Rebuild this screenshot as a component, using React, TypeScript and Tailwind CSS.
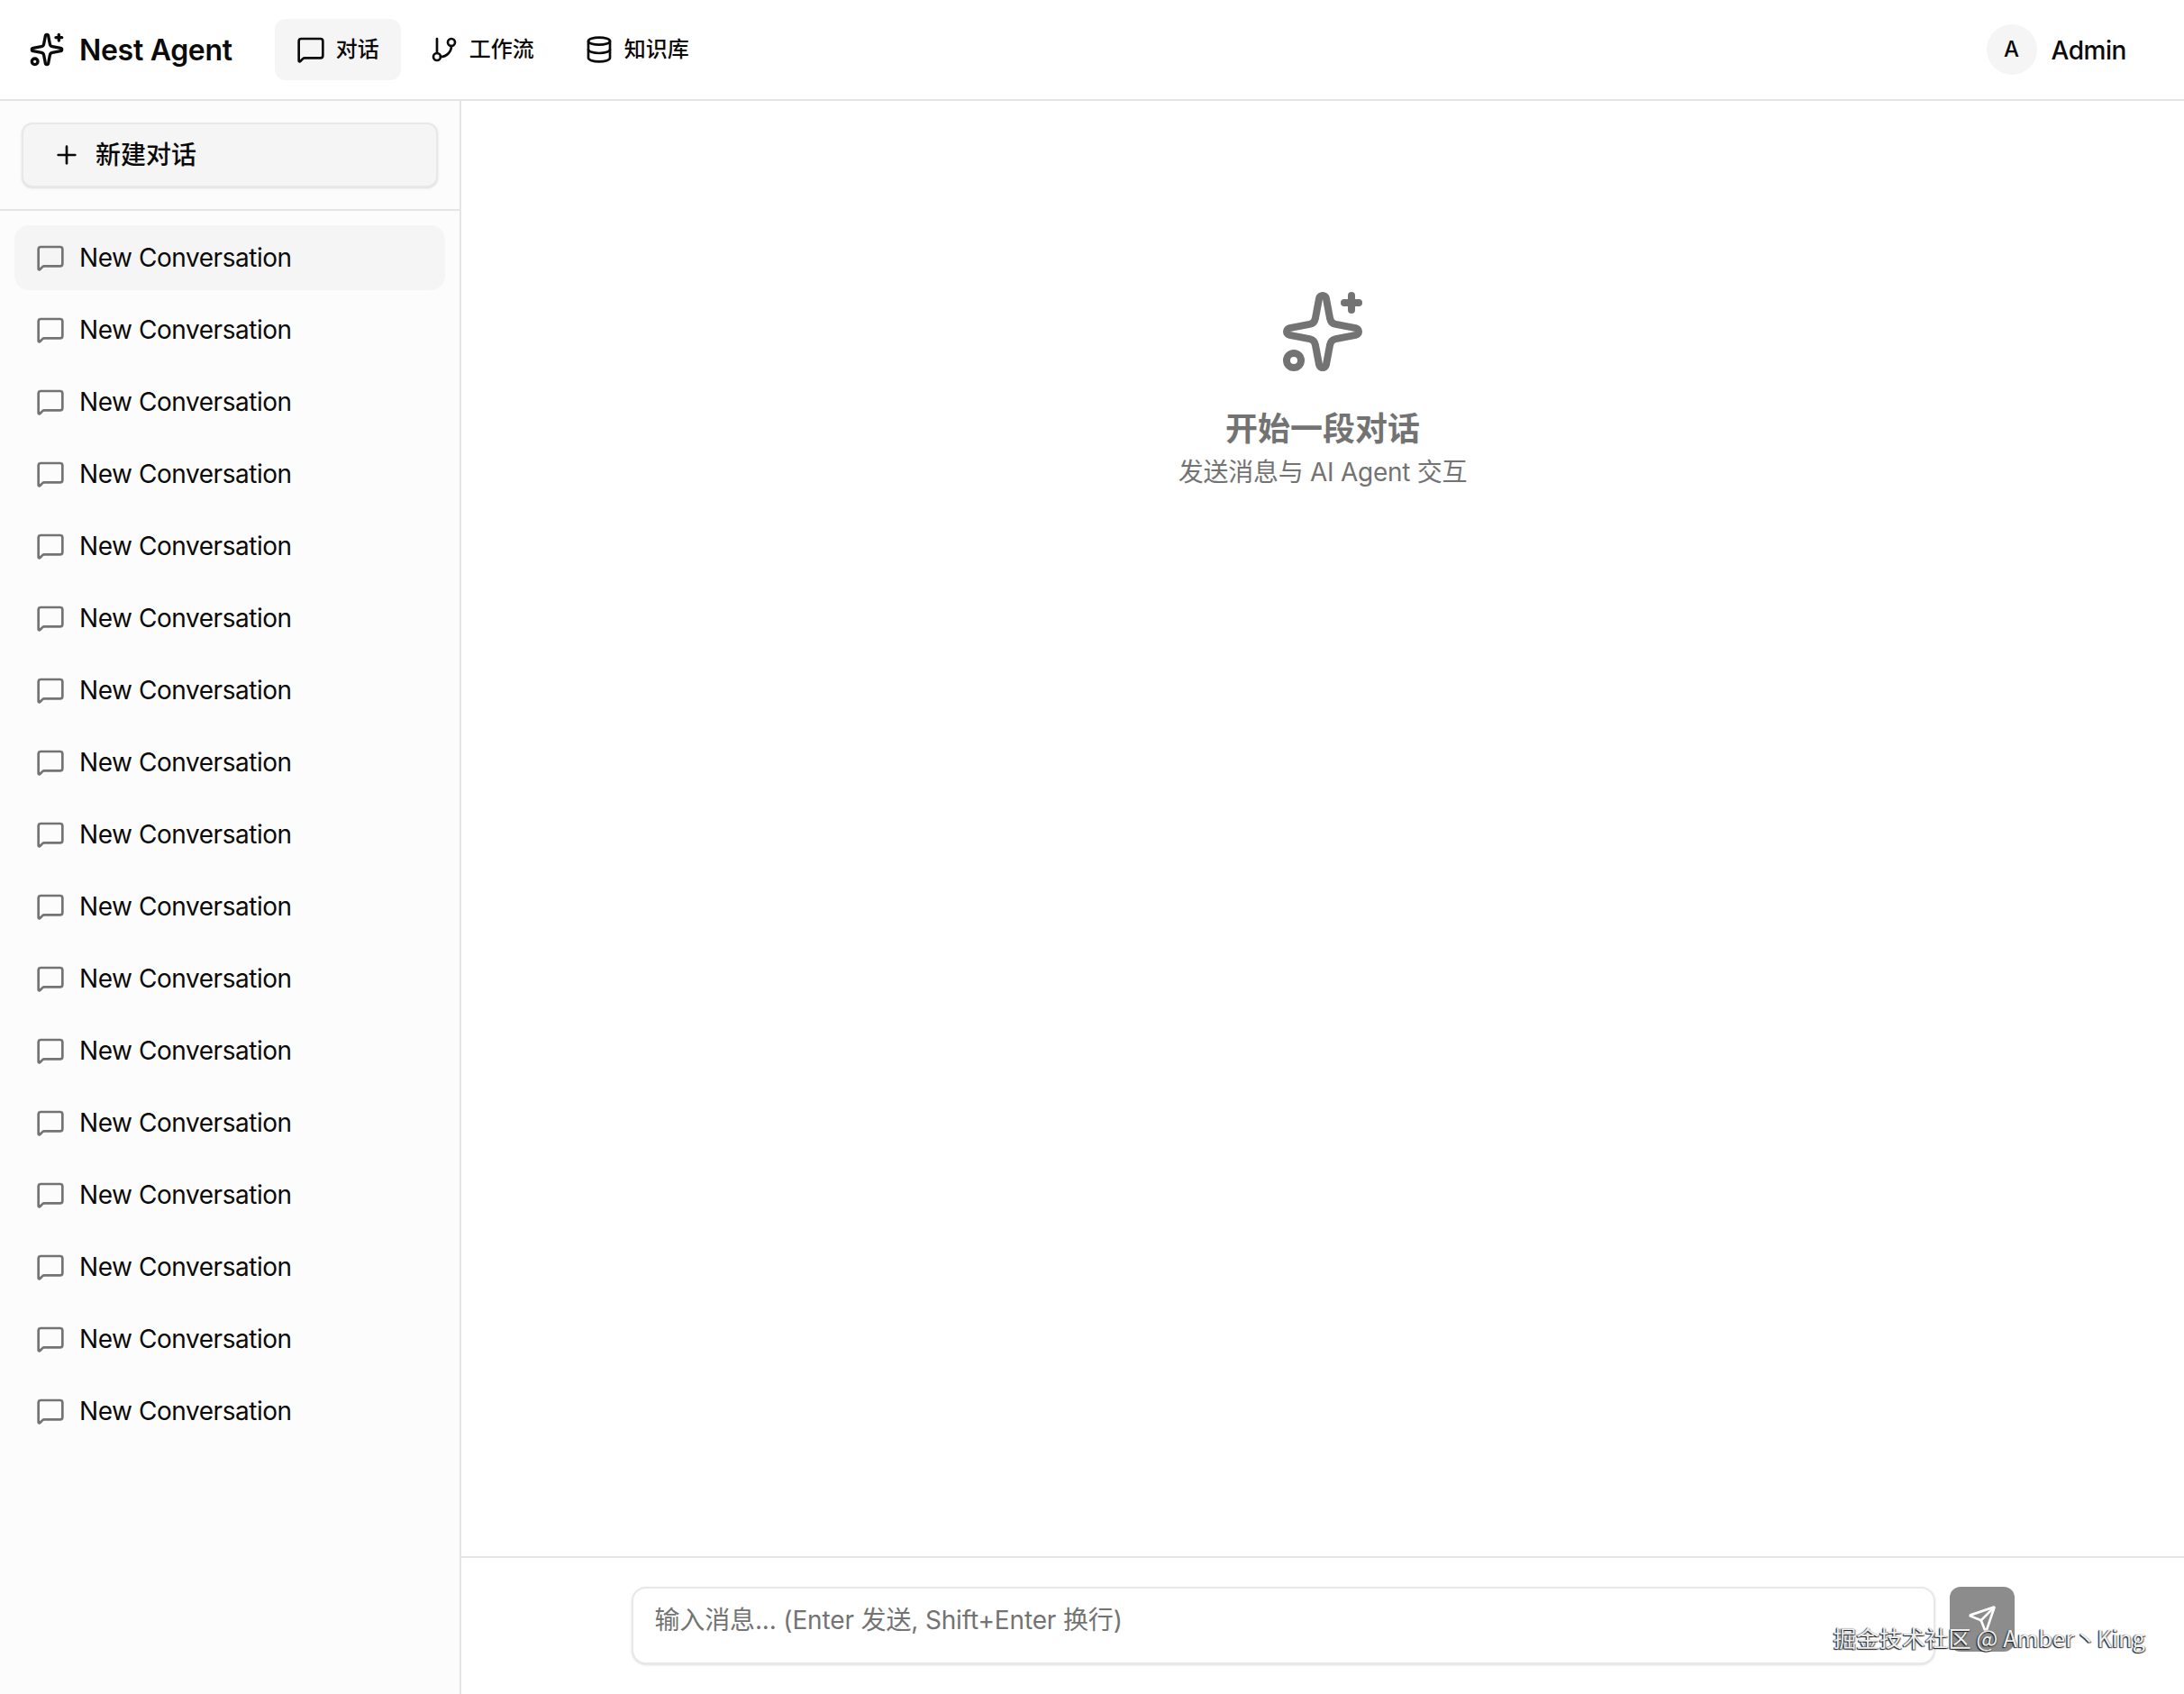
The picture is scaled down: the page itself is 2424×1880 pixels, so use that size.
import { Database, GitBranch, MessageSquare, Plus, Send, Sparkles } from "lucide-react";

const FONT = "font-['Inter','Noto_Sans_CJK_SC',sans-serif]";

const conversations = Array.from({ length: 17 }, (_, i) => ({
  id: i,
  title: "New Conversation",
}));

function Header() {
  return (
    <header className="flex h-[112px] shrink-0 items-center justify-between border-b-2 border-[#e5e5e5] bg-white pl-[32px] pr-[64px]">
      <div className="flex items-center gap-[47px]">
        <div className="flex items-center gap-[16px]">
          <Sparkles size={40} strokeWidth={2} className="text-[#0a0a0a]" />
          <span className="pt-[2px] text-[32px] leading-[40px] font-semibold tracking-[-0.3px] text-[#0a0a0a]">Nest Agent</span>
        </div>
        <nav className="flex items-center gap-[8px]">
          <a className="flex h-[68px] items-center gap-[12px] rounded-[12px] bg-[#f5f5f5] px-[24px] text-[24px] font-medium text-[#0a0a0a]">
            <MessageSquare size={32} strokeWidth={2} />
            对话
          </a>
          <a className="flex h-[68px] items-center gap-[12px] rounded-[12px] px-[24px] text-[24px] font-medium text-[#0a0a0a]">
            <GitBranch size={32} strokeWidth={2} />
            工作流
          </a>
          <a className="flex h-[68px] items-center gap-[12px] rounded-[12px] px-[24px] text-[24px] font-medium text-[#0a0a0a]">
            <Database size={32} strokeWidth={2} />
            知识库
          </a>
        </nav>
      </div>
      <div className="flex items-center gap-[16px]">
        <div className="flex h-[56px] w-[56px] items-center justify-center rounded-full bg-[#f5f5f5] text-[24px] font-medium text-[#0a0a0a]">
          A
        </div>
        <span className="pt-[2px] text-[28px] font-medium tracking-[-0.45px] text-[#0a0a0a]">Admin</span>
      </div>
    </header>
  );
}

function Sidebar() {
  return (
    <aside className="flex w-[512px] shrink-0 flex-col border-r-2 border-[#e5e5e5] bg-[#fcfcfc]">
      <div className="border-b-2 border-[#e5e5e5] p-[24px]">
        <button className="flex h-[72px] w-full items-center gap-[16px] rounded-[12px] border-2 border-[#e8e8e8] bg-[#f5f5f5] px-[32px] text-[28px] font-medium text-[#0a0a0a] shadow-sm">
          <Plus size={32} strokeWidth={2} />
          新建对话
        </button>
      </div>
      <ul className="flex flex-col gap-[8px] p-[16px]">
        {conversations.map((c) => (
          <li
            key={c.id}
            className={
              c.id === 0
                ? "flex h-[72px] items-center gap-[16px] rounded-[16px] bg-[#f5f5f5] px-[24px] text-[28px] tracking-[-0.45px] text-[#0a0a0a]"
                : "flex h-[72px] items-center gap-[16px] rounded-[16px] px-[24px] text-[28px] tracking-[-0.45px] text-[#0a0a0a]"
            }
          >
            <MessageSquare size={32} strokeWidth={2} className="shrink-0 text-[#737373]" />
            {c.title}
          </li>
        ))}
      </ul>
    </aside>
  );
}

function Main() {
  return (
    <main className="flex min-w-0 flex-1 flex-col bg-white">
      <div className="flex flex-1 flex-col items-center pt-[208px] text-[#737373]">
        <Sparkles size={96} strokeWidth={2} />
        <h2 className="mt-[40px] text-[36px] leading-[40px] font-semibold">开始一段对话</h2>
        <p className="mt-[8px] text-[28px] leading-[40px] tracking-[-0.25px]">发送消息与 AI Agent 交互</p>
      </div>
      <div className="border-t-2 border-[#e5e5e5] pb-[33px] pt-[32px]">
        <div className="mx-auto flex max-w-[1535px] items-start gap-[16px]">
          <textarea
            rows={1}
            placeholder="输入消息... (Enter 发送, Shift+Enter 换行)"
            className="h-[86px] flex-1 resize-none rounded-[16px] border-2 border-[#e8e8e8] bg-white px-[24px] py-[14px] text-[28px] leading-[42px] tracking-[-0.15px] shadow-sm outline-none placeholder:text-[#737373]"
          />
          <button className="flex h-[72px] w-[72px] shrink-0 items-center justify-center rounded-[12px] bg-[#8c8c8c] text-white">
            <Send size={32} strokeWidth={2} />
          </button>
        </div>
      </div>
    </main>
  );
}

export default function App() {
  return (
    <div className={`relative flex h-screen flex-col overflow-hidden bg-white ${FONT}`}>
      <Header />
      <div className="flex min-h-0 flex-1">
        <Sidebar />
        <Main />
      </div>
      <span className="absolute bottom-[48px] right-[43px] font-['Noto_Sans_CJK_SC',sans-serif] text-[25.5px] leading-[30px] text-[#eeeeee] [text-shadow:-1px_1px_1px_#222,1px_1px_1px_#666,-1px_0_1px_#666]">
        掘金技术社区 @ Amber丶King
      </span>
    </div>
  );
}
